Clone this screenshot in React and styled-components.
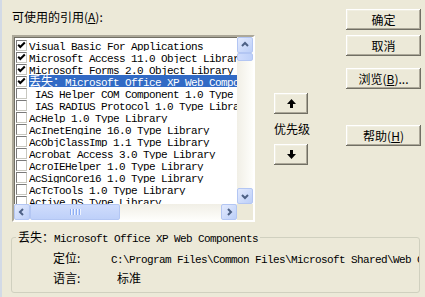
import React from "react";
import styled, { createGlobalStyle, css } from "styled-components";

const GlobalStyle = createGlobalStyle`
  html, body {
    margin: 0;
    padding: 0;
    background: #ece9d8;
  }
  body {
    font-family: "Noto Sans CJK SC", "Noto Sans", sans-serif;
    font-size: 12px;
    color: #000;
  }
`;

const Window = styled.div`
  width: 425px;
  height: 297px;
  box-sizing: border-box;
  border-left: 2px solid #d3dae6;
  background: #ece9d8;
  overflow: hidden;
`;

const Top = styled.div`
  display: flex;
`;

const LeftCol = styled.div`
  padding: 11px 0 0 10px;
  display: flex;
  flex-direction: column;
`;

const Label = styled.div`
  height: 12px;
  line-height: 12px;
  margin-bottom: 12px;
  white-space: nowrap;
`;

const Mono = styled.span`
  font-family: "Liberation Mono", "Noto Sans CJK SC", monospace;
  font-size: 11px;
  letter-spacing: -0.6px;
`;

const Cjk = styled.span`
  font-family: "Noto Sans CJK SC", sans-serif;
  font-size: 12px;
  letter-spacing: 0;
`;

const ListBox = styled.div`
  width: 243px;
  height: 187px;
  box-sizing: border-box;
  border: 2px solid;
  border-color: #aca899 #ffffff #ffffff #aca899;
  box-shadow: inset 1px 1px 0 #716f64;
  background: #fff;
  display: grid;
  grid-template-columns: 1fr 16px;
  grid-template-rows: 1fr 16px;
`;

const Items = styled.div`
  padding-top: 2px;
  overflow: hidden;
  min-width: 0;
`;

const Row = styled.div`
  display: flex;
  align-items: center;
  height: 12px;
  padding-left: 2px;
`;

const Check = styled.span`
  width: 11px;
  height: 11px;
  box-sizing: border-box;
  flex: none;
  border: 1px solid;
  border-color: #7a7a7a #c8c8c0 #c8c8c0 #7a7a7a;
  background: #fff;
  margin-right: 2px;
  display: flex;
`;

const ItemText = styled.span`
  flex: 1;
  min-width: 0;
  height: 12px;
  line-height: 12px;
  white-space: pre;
  overflow: hidden;
  ${(p) =>
    p.$selected &&
    css`
      background: #316ac5;
      color: #fff;
    `}
`;

const VTrack = styled.div`
  display: flex;
  flex-direction: column;
  background: linear-gradient(to right, #f1efe6, #fefefb);
`;

const HTrack = styled.div`
  display: flex;
  background: linear-gradient(to bottom, #f1efe6, #fefefb);
`;

const Spacer = styled.div`
  flex: 1;
`;

const Corner = styled.div`
  background: #ece9d8;
`;

const ScrollBtn = styled.div`
  width: 16px;
  height: 16px;
  box-sizing: border-box;
  flex: none;
  border: 1px solid #b3c6f3;
  border-radius: 2px;
  background: linear-gradient(135deg, #e3eafd, #bccff8);
  display: flex;
  align-items: center;
  justify-content: center;
`;

const Thumb = styled.div`
  box-sizing: border-box;
  flex: none;
  border: 1px solid #b3c6f3;
  border-radius: 2px;
  background: linear-gradient(${(p) => (p.$horizontal ? "to bottom" : "to right")}, #cfdcfc, #bed0f9);
  width: ${(p) => p.$w}px;
  height: ${(p) => p.$h}px;
  display: flex;
  align-items: center;
  justify-content: center;
  gap: 1px;
`;

const Grip = styled.span`
  width: 1px;
  height: 6px;
  background: #8daef5;
  box-shadow: 1px 0 0 #eef3fe;
  margin-right: 1px;
`;

const MidCol = styled.div`
  margin-left: 19px;
  width: 34px;
  padding-top: 93px;
  display: flex;
  flex-direction: column;
`;

const buttonBase = css`
  box-sizing: border-box;
  background: #ece9d8;
  box-shadow: inset -1px -1px 0 #716f64, inset 1px 1px 0 #fff,
    inset -2px -2px 0 #aca899, inset 2px 2px 0 #f1efe2;
  display: flex;
  align-items: center;
  justify-content: center;
  line-height: 12px;
`;

const SmallButton = styled.div`
  ${buttonBase}
  width: 34px;
  height: 21px;
`;

const Priority = styled.div`
  margin: 8px 0;
  height: 14px;
  line-height: 14px;
  text-align: center;
  white-space: nowrap;
`;

const RightCol = styled.div`
  margin-left: 38px;
  width: 75px;
  padding-top: 9px;
  display: flex;
  flex-direction: column;
`;

const Button = styled.div`
  ${buttonBase}
  width: 75px;
  height: 21px;
  margin-top: ${(p) => p.$gap || 0}px;
  white-space: nowrap;
`;

const Group = styled.fieldset`
  margin: 9px 0 0 9px;
  width: 409px;
  box-sizing: border-box;
  padding: 0;
  border: 1px solid #d0d0bf;
  border-radius: 3px;
  min-inline-size: 0;
`;

const Legend = styled.legend`
  margin-left: 4px;
  padding: 0 2px;
  height: 12px;
  line-height: 12px;
  white-space: nowrap;
`;

const Info = styled.div`
  display: grid;
  grid-template-columns: 58px 1fr;
  row-gap: 6px;
  padding: 9px 0 8px 41px;
  line-height: 12px;
`;

const InfoValue = styled.div`
  white-space: pre;
  overflow: hidden;
  margin-left: ${(p) => p.$indent || 0}px;
`;

const CheckMark = () => (
  <svg width="9" height="9" viewBox="0 0 9 9">
    <polyline points="1.2,3.8 3.3,6 7.8,1.5" fill="none" stroke="#000" strokeWidth="2" />
  </svg>
);

const Chevron = ({ dir }) => {
  const pts = {
    up: "2,6 5,3 8,6",
    down: "2,4 5,7 8,4",
    left: "6,2 3,5 6,8",
    right: "4,2 7,5 4,8",
  }[dir];
  return (
    <svg width="10" height="10" viewBox="0 0 10 10">
      <polyline points={pts} fill="none" stroke="#4d6185" strokeWidth="2" />
    </svg>
  );
};

const Arrow = ({ down }) => (
  <svg width="9" height="9" viewBox="0 0 9 9">
    <path
      d={down ? "M3 0h3v4h3L4.5 9 0 4h3z" : "M4.5 0 9 5H6v4H3V5H0z"}
      fill="#000"
    />
  </svg>
);

const items = [
  { text: "Visual Basic For Applications", checked: true },
  { text: "Microsoft Access 11.0 Object Library", checked: true },
  { text: "Microsoft Forms 2.0 Object Library", checked: true },
  { prefix: "丢失：", text: "Microsoft Office XP Web Components", checked: true, selected: true },
  { text: " IAS Helper COM Component 1.0 Type Library" },
  { text: " IAS RADIUS Protocol 1.0 Type Library" },
  { text: "AcHelp 1.0 Type Library" },
  { text: "AcInetEngine 16.0 Type Library" },
  { text: "AcObjClassImp 1.1 Type Library" },
  { text: "Acrobat Access 3.0 Type Library" },
  { text: "AcroIEHelper 1.0 Type Library" },
  { text: "AcSignCore16 1.0 Type Library" },
  { text: "AcTcTools 1.0 Type Library" },
  { text: "Active DS Type Library" },
];

export default function App() {
  return (
    <>
      <GlobalStyle />
      <Window>
        <Top>
          <LeftCol>
            <Label>
              可使用的引用(<u>A</u>):
            </Label>
            <ListBox>
              <Items>
                {items.map((it, i) => (
                  <Row key={i}>
                    <Check>{it.checked && <CheckMark />}</Check>
                    <ItemText $selected={it.selected}>
                      <Mono>
                        {it.prefix && <Cjk>{it.prefix}</Cjk>}
                        {it.text}
                      </Mono>
                    </ItemText>
                  </Row>
                ))}
              </Items>
              <VTrack>
                <ScrollBtn>
                  <Chevron dir="up" />
                </ScrollBtn>
                <Thumb $w={16} $h={8} />
                <Spacer />
                <ScrollBtn>
                  <Chevron dir="down" />
                </ScrollBtn>
              </VTrack>
              <HTrack>
                <ScrollBtn>
                  <Chevron dir="left" />
                </ScrollBtn>
                <Thumb $horizontal $w={90} $h={16}>
                  <Grip />
                  <Grip />
                  <Grip />
                  <Grip />
                </Thumb>
                <Spacer />
                <ScrollBtn>
                  <Chevron dir="right" />
                </ScrollBtn>
              </HTrack>
              <Corner />
            </ListBox>
          </LeftCol>
          <MidCol>
            <SmallButton>
              <Arrow />
            </SmallButton>
            <Priority>优先级</Priority>
            <SmallButton>
              <Arrow down />
            </SmallButton>
          </MidCol>
          <RightCol>
            <Button>确定</Button>
            <Button $gap={5}>取消</Button>
            <Button $gap={12}>
              浏览(<u>B</u>)...
            </Button>
            <Button $gap={36}>
              帮助(<u>H</u>)
            </Button>
          </RightCol>
        </Top>
        <Group>
          <Legend>
            <Mono>
              <Cjk>丢失：</Cjk>Microsoft Office XP Web Components
            </Mono>
          </Legend>
          <Info>
            <div>定位:</div>
            <InfoValue>
              <Mono>C:\Program Files\Common Files\Microsoft Shared\Web Components\10\OWC10.DLL</Mono>
            </InfoValue>
            <div>语言:</div>
            <InfoValue $indent={6}>标准</InfoValue>
          </Info>
        </Group>
      </Window>
    </>
  );
}
